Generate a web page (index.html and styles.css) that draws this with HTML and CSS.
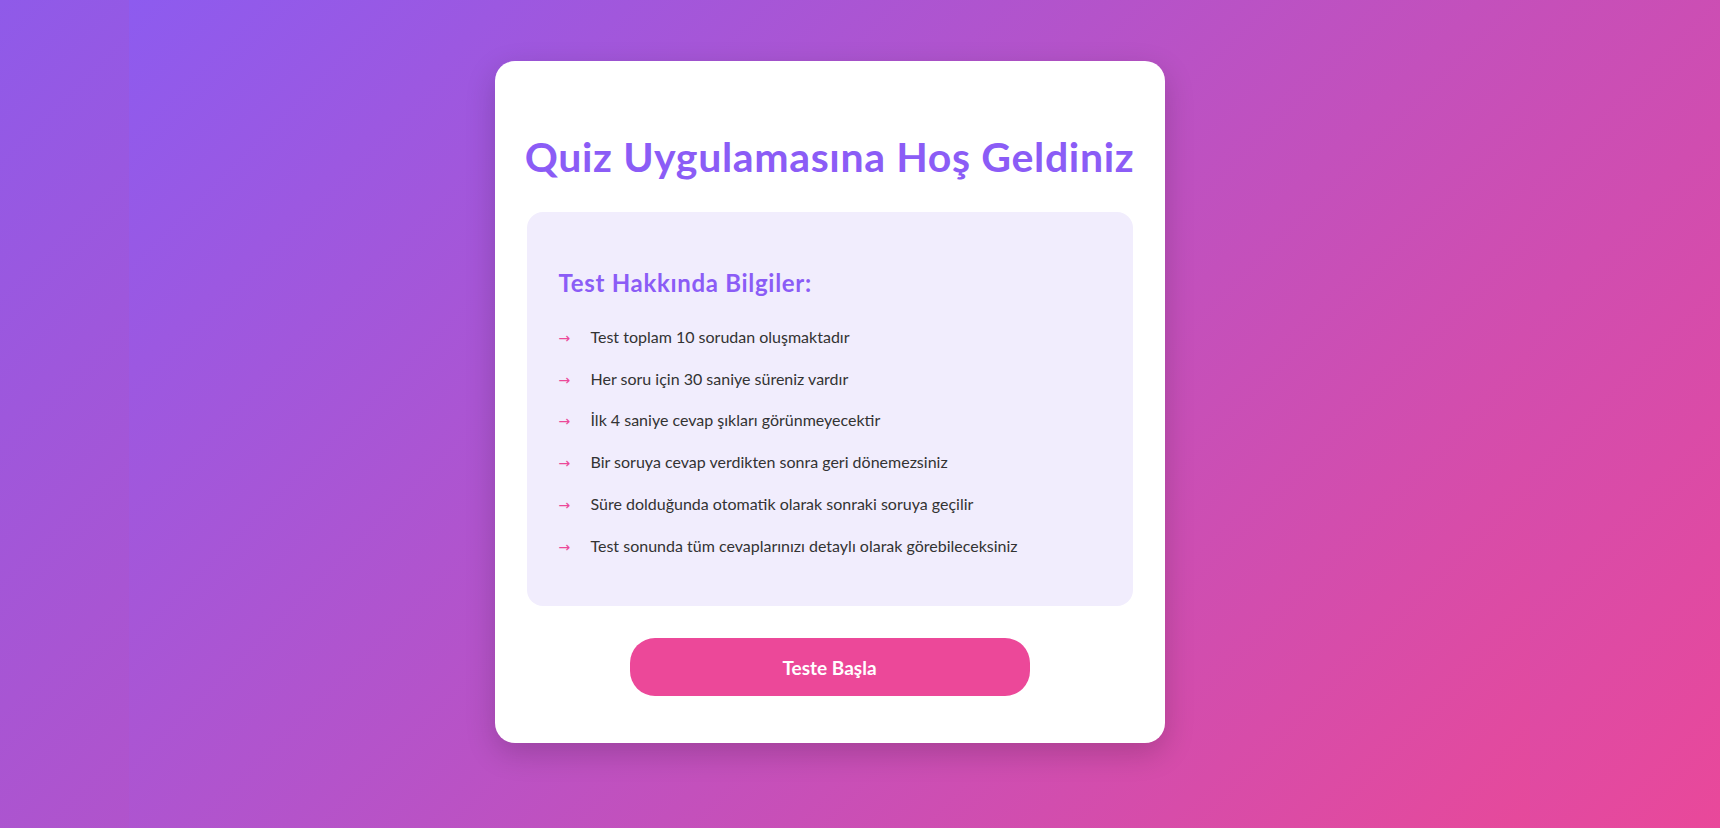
FILE: index.html
```html
<!DOCTYPE html>
<html lang="tr">
<head>
<meta charset="utf-8">
<title>Quiz Uygulaması</title>
<link rel="stylesheet" href="styles.css">
</head>
<body>
<div class="page">
  <div class="card">
    <h1 class="title">Quiz Uygulamasına Hoş Geldiniz</h1>
    <div class="info">
      <h3 class="info-title">Test Hakkında Bilgiler:</h3>
      <ul class="info-list">
        <li class="info-item"><span class="arrow">→</span>Test toplam 10 sorudan oluşmaktadır</li>
        <li class="info-item"><span class="arrow">→</span>Her soru için 30 saniye süreniz vardır</li>
        <li class="info-item"><span class="arrow">→</span>İlk 4 saniye cevap şıkları görünmeyecektir</li>
        <li class="info-item"><span class="arrow">→</span>Bir soruya cevap verdikten sonra geri dönemezsiniz</li>
        <li class="info-item"><span class="arrow">→</span>Süre dolduğunda otomatik olarak sonraki soruya geçilir</li>
        <li class="info-item"><span class="arrow">→</span>Test sonunda tüm cevaplarınızı detaylı olarak görebileceksiniz</li>
      </ul>
    </div>
    <div class="actions">
      <button class="start-btn" type="button">Teste Başla</button>
    </div>
  </div>
</div>
</body>
</html>
```
FILE: styles.css
```css
html, body {
  margin: 0;
  padding: 0;
  height: 100%;
}
body {
  font-family: Lato, "Open Sans", sans-serif;
  background: linear-gradient(135deg, #8f5ae9 0%, #e9489a 100%);
  overflow: hidden;
}
.page {
  box-sizing: border-box;
  width: 1401px;
  height: 828px;
  margin-left: 129px;
  padding-top: 61px;
  display: flex;
  justify-content: center;
  align-items: flex-start;
  background: linear-gradient(135deg, #8d5bef 0%, #e6499b 100%);
}
.card {
  box-sizing: border-box;
  width: 670px;
  background: #ffffff;
  border-radius: 20px;
  padding: 32px 32px 47px;
  box-shadow: 0 10px 30px rgba(0, 0, 0, 0.18);
}
.title {
  margin: 40px -10px 31px;
  font-size: 41px;
  line-height: 48px;
  font-weight: 700;
  letter-spacing: 0.65px;
  text-align: center;
  white-space: nowrap;
  color: #8b5cf6;
}
.info {
  background: #f1edfd;
  border-radius: 16px;
  padding: 32px;
}
.info-title {
  margin: 23px 0 17px;
  font-size: 24px;
  line-height: 32px;
  font-weight: 700;
  letter-spacing: 0.7px;
  color: #8b5cf6;
}
.info-list {
  list-style: none;
  margin: 0 0 8px;
  padding: 0;
}
.info-item {
  display: flex;
  align-items: baseline;
  padding: 10px 0;
  font-size: 16px;
  line-height: 21.7px;
  color: #333333;
}
.arrow {
  flex: none;
  width: 32px;
  color: #ec4899;
  font-family: "DejaVu Sans", sans-serif;
  font-size: 14px;
  line-height: 1;
}
.actions {
  display: flex;
  justify-content: center;
  margin-top: 32px;
}
.start-btn {
  width: 400px;
  height: 58px;
  border: none;
  border-radius: 25px;
  background: #ec4899;
  color: #ffffff;
  font-family: inherit;
  font-size: 19px;
  font-weight: 700;
  cursor: pointer;
}
```
